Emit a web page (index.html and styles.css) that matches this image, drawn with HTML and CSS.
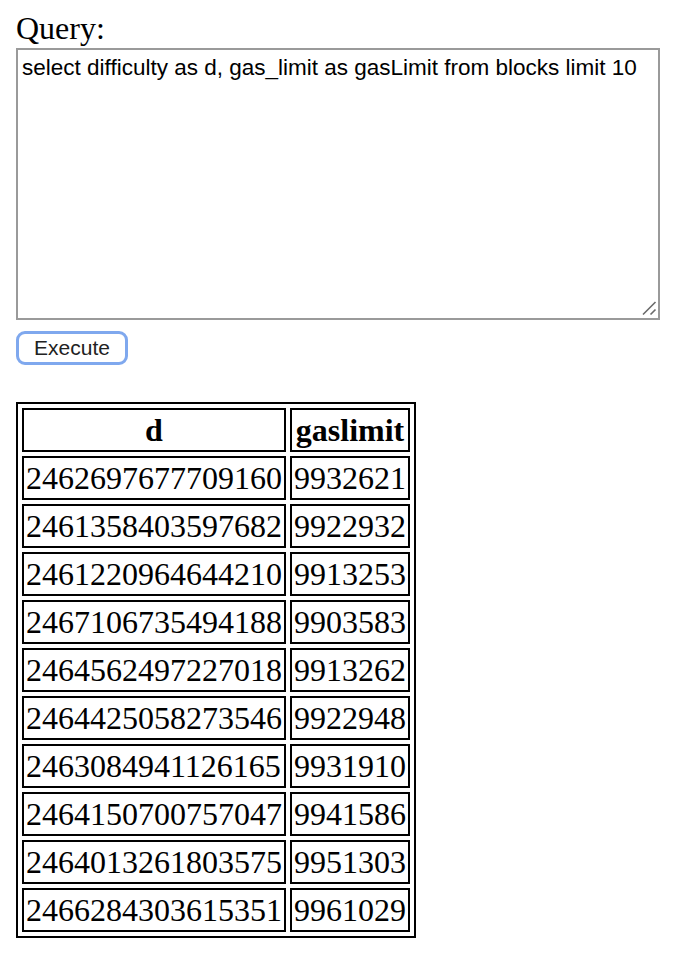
FILE: index.html
```html
<!DOCTYPE html>
<html>
<head>
<meta charset="utf-8">
<link rel="stylesheet" href="styles.css">
</head>
<body>
<div class="page">
  <div class="label">Query:</div>
  <div class="editor">
    <textarea class="query" spellcheck="false">select difficulty as d, gas_limit as gasLimit from blocks limit 10</textarea>
    <svg class="grip" width="16" height="16" viewBox="0 0 16 16"><path d="M2 14.5 L14.5 2 M9.5 14.5 L14.5 9.5" stroke="#6b6b6b" stroke-width="1.6" fill="none"/></svg>
  </div>
  <button class="exec">Execute</button>
  <table class="results">
    <tr><th>d</th><th>gaslimit</th></tr>
    <tr><td>2462697677709160</td><td>9932621</td></tr>
    <tr><td>2461358403597682</td><td>9922932</td></tr>
    <tr><td>2461220964644210</td><td>9913253</td></tr>
    <tr><td>2467106735494188</td><td>9903583</td></tr>
    <tr><td>2464562497227018</td><td>9913262</td></tr>
    <tr><td>2464425058273546</td><td>9922948</td></tr>
    <tr><td>2463084941126165</td><td>9931910</td></tr>
    <tr><td>2464150700757047</td><td>9941586</td></tr>
    <tr><td>2464013261803575</td><td>9951303</td></tr>
    <tr><td>2466284303615351</td><td>9961029</td></tr>
  </table>
</div>
</body>
</html>
```
FILE: styles.css
```css
html, body {
  margin: 0;
  padding: 0;
  background: #fff;
}
.page {
  padding: 10px 16px 0 16px;
  font-family: "Liberation Serif", "Times New Roman", serif;
  color: #000;
}
.label {
  font-size: 32px;
  line-height: 37px;
  height: 38px;
}
.editor {
  position: relative;
  width: 644px;
  height: 272px;
}
.query {
  display: block;
  box-sizing: border-box;
  width: 644px;
  height: 272px;
  margin: 0;
  border: 2px solid #9a9a9a;
  padding: 5px 4px;
  font-family: "Liberation Sans", Arial, sans-serif;
  font-size: 22.5px;
  line-height: 26px;
  color: #000;
  background: #fff;
  resize: none;
  outline: none;
}
.grip {
  position: absolute;
  right: 3px;
  bottom: 4px;
}
.exec {
  display: block;
  box-sizing: border-box;
  margin-top: 11px;
  width: 112px;
  height: 34px;
  padding: 0;
  border: 3px solid #7fa8ee;
  border-radius: 9px;
  background: #fff;
  font-family: "Liberation Sans", Arial, sans-serif;
  font-size: 21px;
  color: #222;
}
.results {
  margin-top: 37px;
  border: 2px solid #000;
  border-spacing: 4px;
  font-size: 32px;
  line-height: 36px;
}
.results th,
.results td {
  border: 2px solid #000;
  padding: 2px;
}
.results th {
  font-weight: bold;
  text-align: center;
}
.results td {
  text-align: left;
}
```
